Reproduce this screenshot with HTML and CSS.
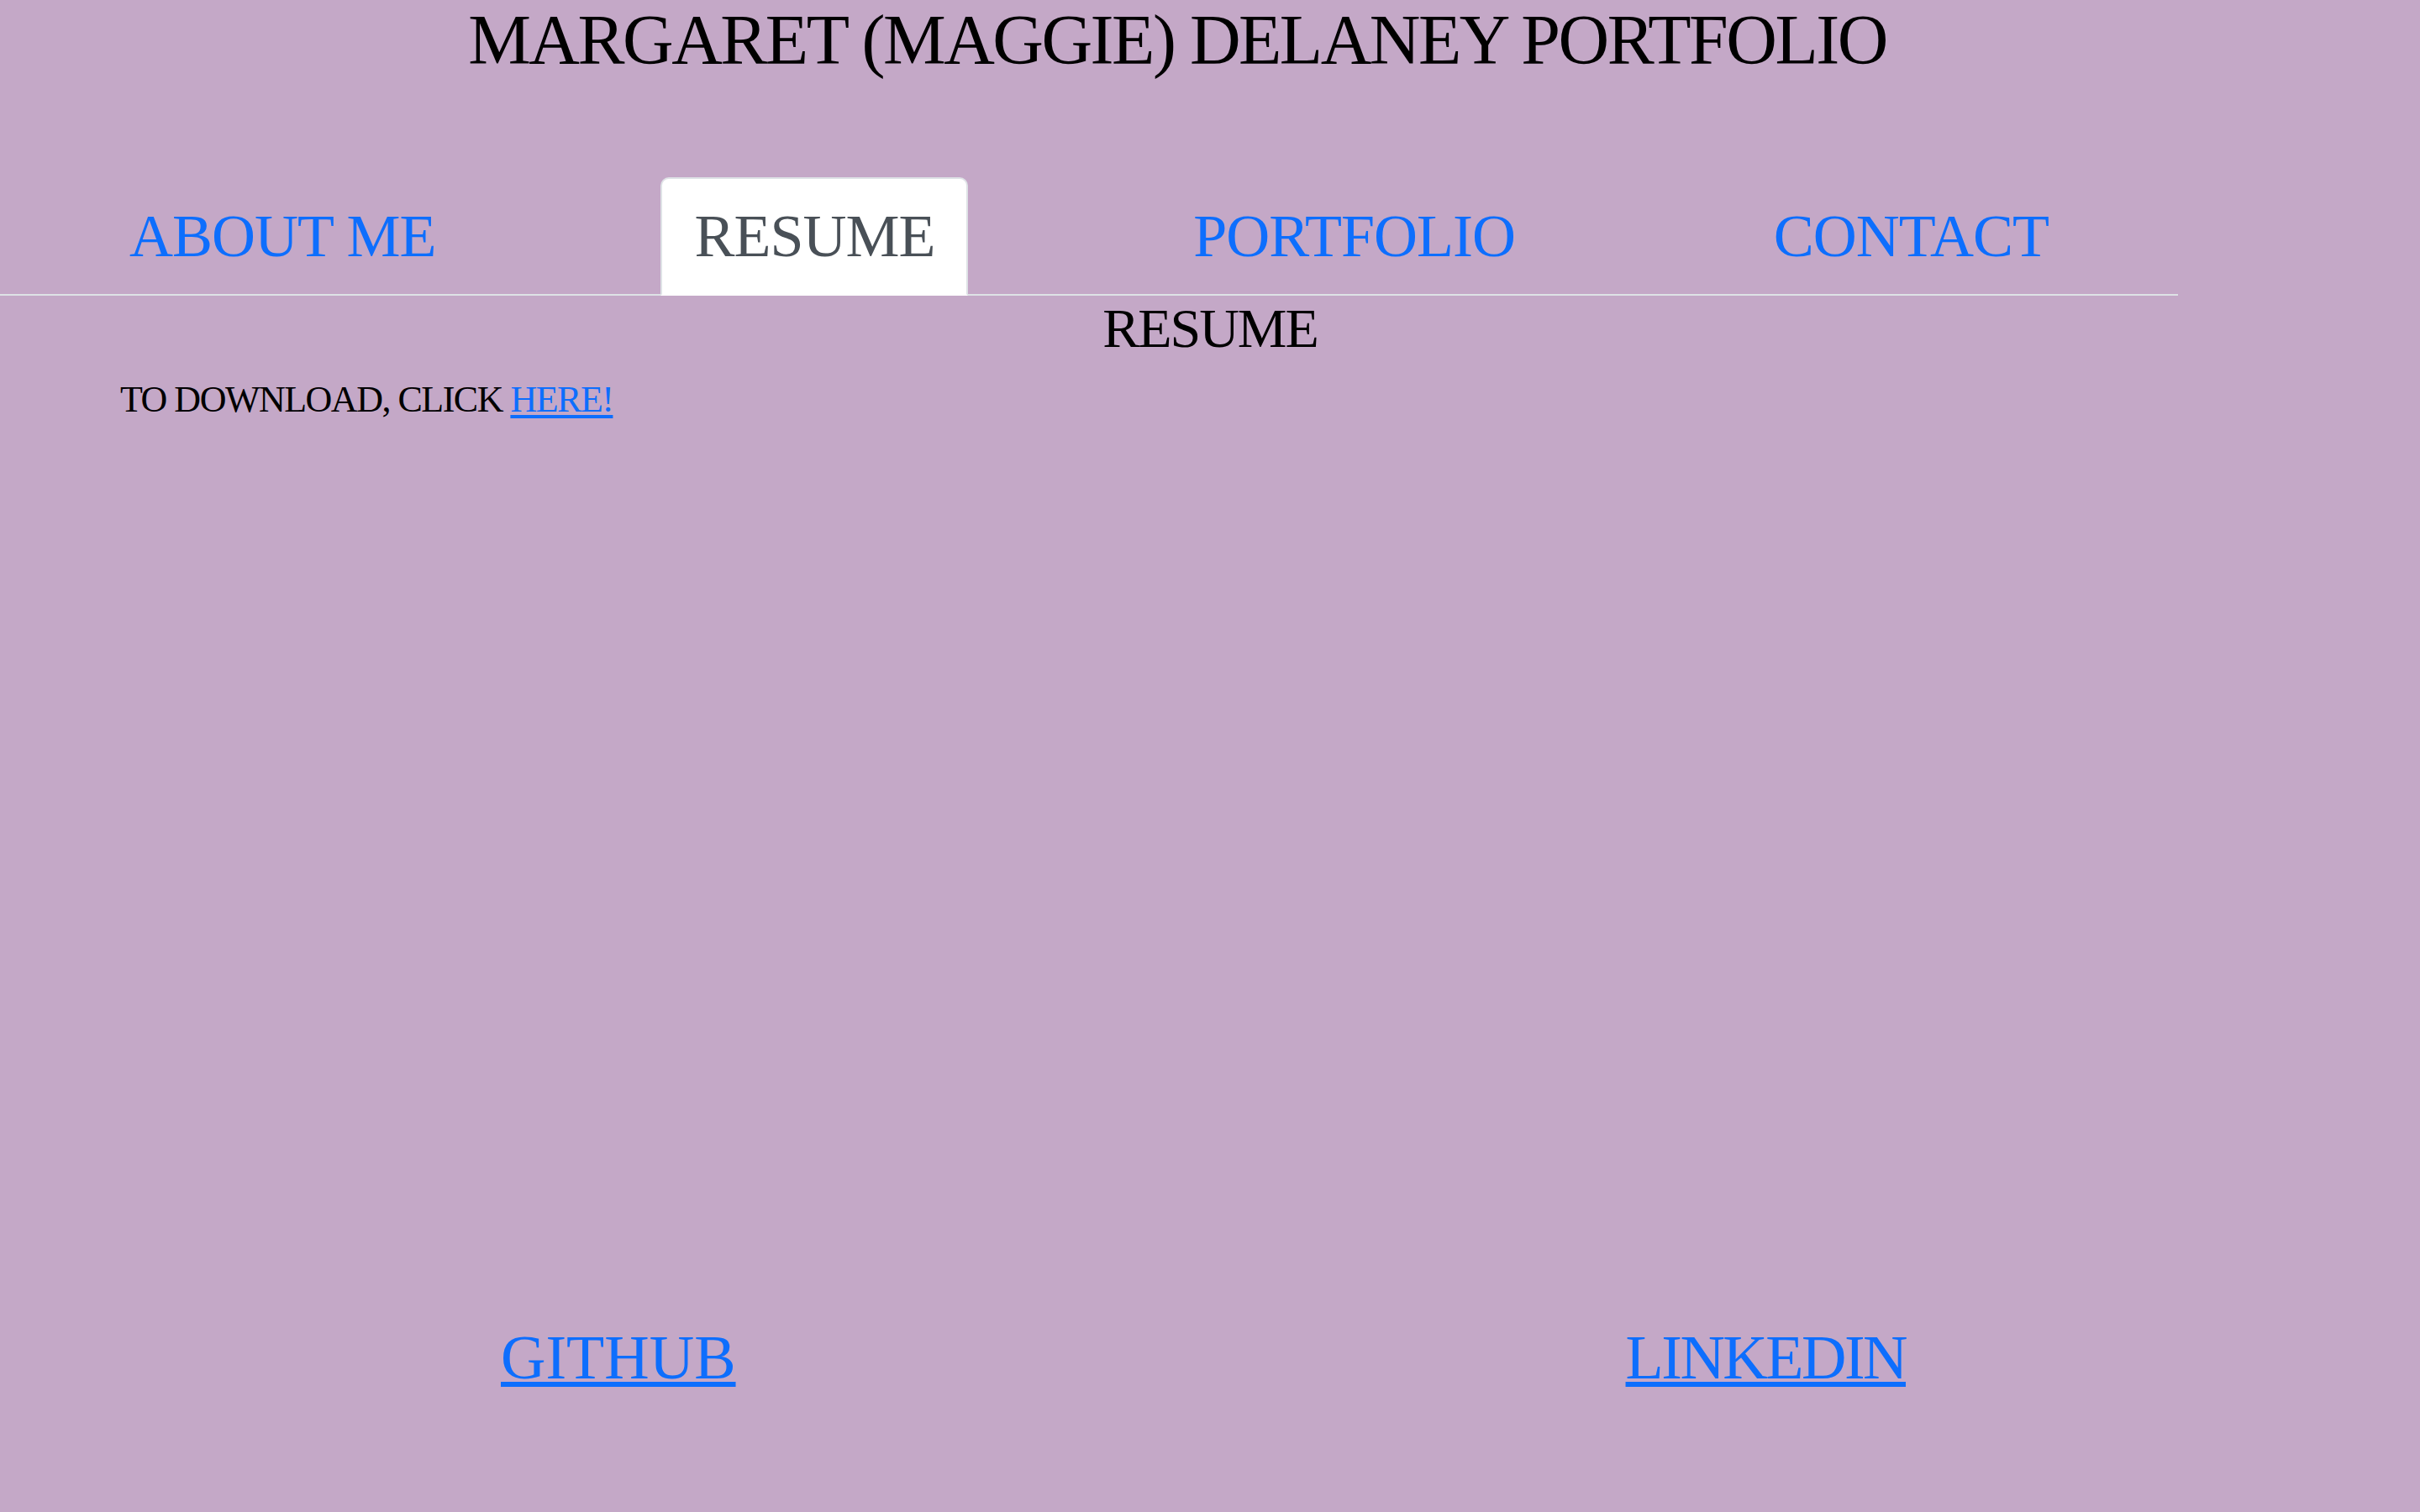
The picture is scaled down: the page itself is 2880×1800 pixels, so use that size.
FILE: index.html
```html
<!DOCTYPE html>
<html lang="en">
<head>
<meta charset="utf-8">
<title>Margaret (Maggie) Delaney Portfolio</title>
<link rel="stylesheet" href="styles.css">
</head>
<body>
  <header class="site-header">
    <h1 class="site-title">MARGARET (MAGGIE) DELANEY PORTFOLIO</h1>
  </header>
  <nav class="tabs">
    <ul class="tab-list">
      <li class="tab-item"><a class="tab-link" href="#">ABOUT ME</a></li>
      <li class="tab-item"><a class="tab-link active" href="#">RESUME</a></li>
      <li class="tab-item"><a class="tab-link" href="#">PORTFOLIO</a></li>
      <li class="tab-item"><a class="tab-link" href="#">CONTACT</a></li>
    </ul>
  </nav>
  <main class="content">
    <h2 class="section-title">RESUME</h2>
    <p class="download">TO DOWNLOAD, CLICK <a class="inline-link" href="#">HERE!</a></p>
  </main>
  <footer class="site-footer">
    <a class="footer-link" href="#">GITHUB</a>
    <a class="footer-link linkedin" href="#">LINKEDIN</a>
  </footer>
</body>
</html>
```

FILE: styles.css
```css
html, body {
  margin: 0;
  padding: 0;
}

body {
  background: #c4a8c7;
  color: #000;
  font-family: "Liberation Serif", "Times New Roman", serif;
  min-height: 100vh;
  display: flex;
  flex-direction: column;
}

.site-header {
  padding-top: 2px;
}

.site-title {
  margin: 0;
  padding-right: 78px;
  font-size: 84px;
  font-weight: 400;
  line-height: 1.1;
  letter-spacing: -2.5px;
  text-align: center;
}

.tabs {
  margin-top: 117px;
  width: 2592px;
}

.tab-list {
  list-style: none;
  margin: 0;
  padding: 0;
  display: flex;
  justify-content: space-around;
  border-bottom: 2px solid #dee2e6;
}

.tab-item {
  margin-bottom: -2px;
}

.tab-link {
  display: block;
  padding: 25px 38px;
  font-size: 72px;
  line-height: 1.2;
  letter-spacing: -1px;
  color: #0d6efd;
  text-decoration: none;
  border: 2px solid transparent;
  border-top-left-radius: 10px;
  border-top-right-radius: 10px;
}

.tab-link.active {
  color: #495057;
  background: #fff;
  border-color: #dee2e6 #dee2e6 #fff;
}

.content {
  flex: 1;
}

.section-title {
  margin: -1px 0 0;
  font-size: 66px;
  font-weight: 400;
  line-height: 1.2;
  letter-spacing: -2px;
  text-align: center;
}

.download {
  margin: 13px 0 0;
  padding-left: 143px;
  font-size: 44px;
  line-height: 1.5;
  letter-spacing: -1.5px;
}

.inline-link {
  color: #0d6efd;
  text-decoration-thickness: 4px;
  text-underline-offset: 4px;
}

.site-footer {
  display: flex;
  justify-content: space-between;
  padding: 0 612px 139px 596px;
}

.footer-link {
  font-size: 74px;
  line-height: 1.2;
  color: #0d6efd;
  text-decoration-thickness: 6px;
  text-underline-offset: 4px;
}

.footer-link.linkedin {
  letter-spacing: -2.5px;
}
```
